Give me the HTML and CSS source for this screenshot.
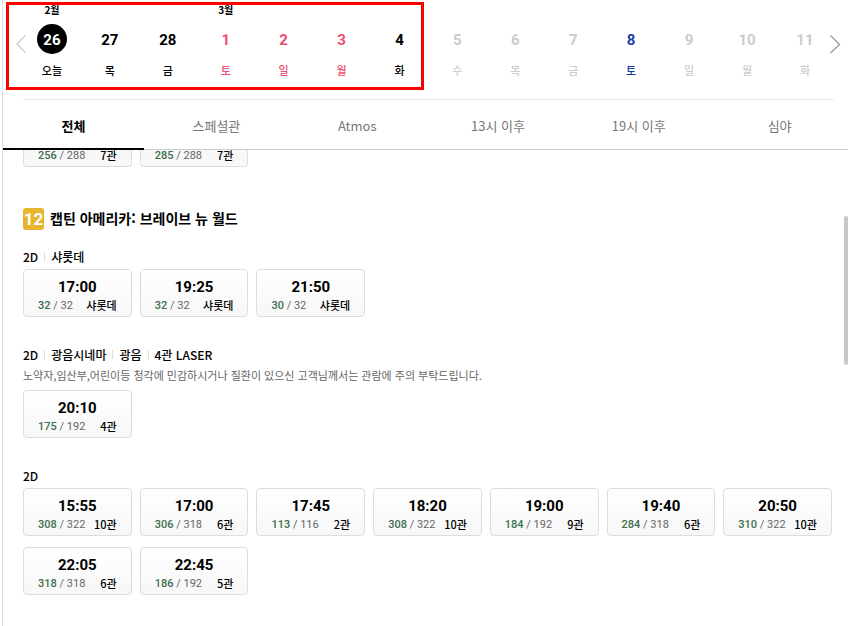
FILE: index.html
```html
<!DOCTYPE html>
<html lang="ko">

<head>
    <meta charset="UTF-8">
    <meta name="viewport" content="width=device-width, initial-scale=1.0">
    <title>상영시간표</title>
    <link rel="stylesheet" href="styles.css">
</head>

<body>

    <div class="schedule">
        <nav class="dates">
            <button type="button" class="arrow prev" aria-label="이전">
                <svg width="12" height="20" viewBox="0 0 12 20"><path d="M10.5 1.5L2 10l8.5 8.5" /></svg>
            </button>
            <ul class="date-list">
                <li><button type="button" class="day active"><span class="month">2월</span><strong>26</strong><em>오늘</em></button></li>
                <li><button type="button" class="day"><strong>27</strong><em>목</em></button></li>
                <li><button type="button" class="day"><strong>28</strong><em>금</em></button></li>
                <li><button type="button" class="day red"><span class="month">3월</span><strong>1</strong><em>토</em></button></li>
                <li><button type="button" class="day red"><strong>2</strong><em>일</em></button></li>
                <li><button type="button" class="day red"><strong>3</strong><em>월</em></button></li>
                <li><button type="button" class="day"><strong>4</strong><em>화</em></button></li>
                <li><button type="button" class="day off" disabled><strong>5</strong><em>수</em></button></li>
                <li><button type="button" class="day off" disabled><strong>6</strong><em>목</em></button></li>
                <li><button type="button" class="day off" disabled><strong>7</strong><em>금</em></button></li>
                <li><button type="button" class="day sat"><strong>8</strong><em>토</em></button></li>
                <li><button type="button" class="day off" disabled><strong>9</strong><em>일</em></button></li>
                <li><button type="button" class="day off" disabled><strong>10</strong><em>월</em></button></li>
                <li><button type="button" class="day off" disabled><strong>11</strong><em>화</em></button></li>
            </ul>
            <button type="button" class="arrow next" aria-label="다음">
                <svg width="12" height="20" viewBox="0 0 12 20"><path d="M1.5 1.5L10.5 10.5l-9 8.5" /></svg>
            </button>
            <div class="highlight"></div>
        </nav>

        <div class="tabs">
            <button type="button" class="active">전체</button>
            <button type="button">스페셜관</button>
            <button type="button">Atmos</button>
            <button type="button">13시 이후</button>
            <button type="button">19시 이후</button>
            <button type="button">심야</button>
        </div>

        <main class="list">
            <!-- 스크롤되어 위쪽이 가려진 줄 -->
            <div class="times cut">
                <button type="button" class="time"><span class="seat"><b>256</b> / 288</span><span class="hall">7관</span></button>
                <button type="button" class="time"><span class="seat"><b>285</b> / 288</span><span class="hall">7관</span></button>
            </div>

            <h2><span class="age">12</span>캡틴 아메리카: 브레이브 뉴 월드</h2>

            <section>
                <ul class="type">
                    <li>2D</li>
                    <li>샤롯데</li>
                </ul>
                <div class="times">
                    <button type="button" class="time"><strong>17:00</strong><span class="seat"><b>32</b> / 32</span><span class="hall">샤롯데</span></button>
                    <button type="button" class="time"><strong>19:25</strong><span class="seat"><b>32</b> / 32</span><span class="hall">샤롯데</span></button>
                    <button type="button" class="time"><strong>21:50</strong><span class="seat"><b>30</b> / 32</span><span class="hall">샤롯데</span></button>
                </div>
            </section>

            <section>
                <ul class="type">
                    <li>2D</li>
                    <li>광음시네마</li>
                    <li>광음</li>
                    <li>4관 LASER</li>
                </ul>
                <p class="notice">노약자,임산부,어린이등 청각에 민감하시거나 질환이 있으신 고객님께서는 관람에 주의 부탁드립니다.</p>
                <div class="times">
                    <button type="button" class="time"><strong>20:10</strong><span class="seat"><b>175</b> / 192</span><span class="hall">4관</span></button>
                </div>
            </section>

            <section>
                <ul class="type">
                    <li>2D</li>
                </ul>
                <div class="times">
                    <button type="button" class="time"><strong>15:55</strong><span class="seat"><b>308</b> / 322</span><span class="hall">10관</span></button>
                    <button type="button" class="time"><strong>17:00</strong><span class="seat"><b>306</b> / 318</span><span class="hall">6관</span></button>
                    <button type="button" class="time"><strong>17:45</strong><span class="seat"><b>113</b> / 116</span><span class="hall">2관</span></button>
                    <button type="button" class="time"><strong>18:20</strong><span class="seat"><b>308</b> / 322</span><span class="hall">10관</span></button>
                    <button type="button" class="time"><strong>19:00</strong><span class="seat"><b>184</b> / 192</span><span class="hall">9관</span></button>
                    <button type="button" class="time"><strong>19:40</strong><span class="seat"><b>284</b> / 318</span><span class="hall">6관</span></button>
                    <button type="button" class="time"><strong>20:50</strong><span class="seat"><b>310</b> / 322</span><span class="hall">10관</span></button>
                    <button type="button" class="time"><strong>22:05</strong><span class="seat"><b>318</b> / 318</span><span class="hall">6관</span></button>
                    <button type="button" class="time"><strong>22:45</strong><span class="seat"><b>186</b> / 192</span><span class="hall">5관</span></button>
                </div>
            </section>

            <div class="scrollbar"></div>
        </main>
    </div>

</body>

</html>
```
FILE: styles.css
```css
* {
    box-sizing: border-box;
}

body {
    margin: 0;
    background-color: #fff;
    color: #000;
    font-family: "Noto Sans CJK KR", sans-serif;
    font-size: 12px;
}

ul {
    margin: 0;
    padding: 0;
    list-style: none;
}

button {
    margin: 0;
    padding: 0;
    border: none;
    background: none;
    color: inherit;
    font-family: inherit;
    cursor: pointer;
}

.schedule {
    display: flex;
    flex-direction: column;
    min-height: 100vh;
    margin-left: 2px;
    border-left: 1px solid #ddd;
}

/* 날짜 */
.dates {
    position: relative;
    padding: 0 14px 0 20px;
}

.date-list {
    display: flex;
    height: 100px;
    border-bottom: 1px solid #eaeaea;
}

.date-list li {
    flex: 1;
}

.day {
    display: flex;
    flex-direction: column;
    align-items: center;
    width: 100%;
    padding-top: 24px;
    position: relative;
}

.day .month {
    position: absolute;
    top: 2px;
    font-size: 10px;
    line-height: 16px;
    font-weight: 700;
}

.day strong {
    width: 30px;
    padding-top: 2px;
    border-radius: 50%;
    font-family: Roboto, sans-serif;
    font-size: 15px;
    line-height: 28px;
    font-weight: 700;
}

.day em {
    margin-top: 8px;
    font-size: 11px;
    line-height: 16px;
    font-style: normal;
    font-weight: 500;
}

.day.active strong {
    background-color: #000;
    color: #fff;
}

.day.red {
    color: #ef4d6f;
}

.day.red .month {
    color: #000;
}

.day.sat {
    color: #1f3ca6;
}

.day.off {
    color: #ccc;
}

.arrow {
    position: absolute;
    top: 34px;
    height: 20px;
}

.arrow svg {
    display: block;
    fill: none;
    stroke: #999;
    stroke-width: 1.3;
}

.prev {
    left: 12px;
}

.prev svg {
    stroke: #ccc;
}

.next {
    right: 7px;
}

.highlight {
    position: absolute;
    top: 2px;
    left: 3px;
    width: 418px;
    height: 88px;
    border: 3px solid #f00;
    pointer-events: none;
}

/* 탭 */
.tabs {
    display: flex;
    height: 50px;
    border-bottom: 1px solid #ccc;
}

.tabs button {
    flex: 1;
    height: 50px;
    padding-top: 4px;
    border-bottom: 2px solid transparent;
    color: #777;
    font-size: 13px;
    line-height: 20px;
}

.tabs button + button {
    padding-left: 4px;
}

.tabs .active {
    flex: 0 0 141px;
    border-color: #000;
    color: #000;
    font-weight: 700;
}

/* 상영 목록 */
.list {
    position: relative;
    flex: 1;
    padding: 0 16px 0 20px;
}

.times {
    display: grid;
    grid-template-columns: repeat(7, 1fr);
    gap: 11px 8px;
}

.time {
    display: grid;
    grid-template-columns: auto auto;
    justify-content: space-between;
    align-content: start;
    height: 48px;
    padding: 8px 14px 0;
    border: 1px solid #ddd;
    border-radius: 4px;
    background: linear-gradient(#fff, #f7f7f7);
    line-height: 18px;
}

.time strong {
    grid-column: 1 / 3;
    font-family: Roboto, sans-serif;
    font-size: 15px;
    font-weight: 700;
}

.seat {
    color: #666;
    font-family: Roboto, sans-serif;
    font-size: 11px;
    line-height: 20px;
}

.seat b {
    color: #3d6f50;
    font-weight: 500;
}

.hall {
    font-size: 11px;
    font-weight: 500;
}

.cut .time {
    height: 17px;
    padding-top: 0;
    border-top: none;
    border-radius: 0 0 4px 4px;
    background: #f8f8f8;
    line-height: 11px;
}

.cut .seat {
    line-height: 11px;
}

h2 {
    display: flex;
    align-items: flex-start;
    gap: 6px;
    margin: 41px 0 17px;
    font-size: 14px;
    line-height: 20px;
    font-weight: 700;
}

.age {
    width: 21px;
    border-radius: 3px;
    background-color: #e8b42e;
    color: #fff;
    font-family: Roboto, sans-serif;
    font-size: 17px;
    line-height: 22px;
    text-align: center;
}

section {
    margin-bottom: 28px;
}

.type {
    display: flex;
    align-items: center;
    height: 22px;
    padding-bottom: 3px;
    font-size: 12px;
    font-weight: 500;
}

.type li {
    display: flex;
    align-items: center;
}

.type li + li::before {
    content: "";
    width: 1px;
    height: 9px;
    margin: 0 6px;
    background-color: #ddd;
}

.notice {
    margin: 0 0 7px;
    color: #666;
    font-size: 11px;
    line-height: 16px;
}

.scrollbar {
    position: absolute;
    top: 66px;
    right: 0;
    width: 4px;
    height: 149px;
    border-radius: 2px;
    background-color: #c8c8c8;
}
```
